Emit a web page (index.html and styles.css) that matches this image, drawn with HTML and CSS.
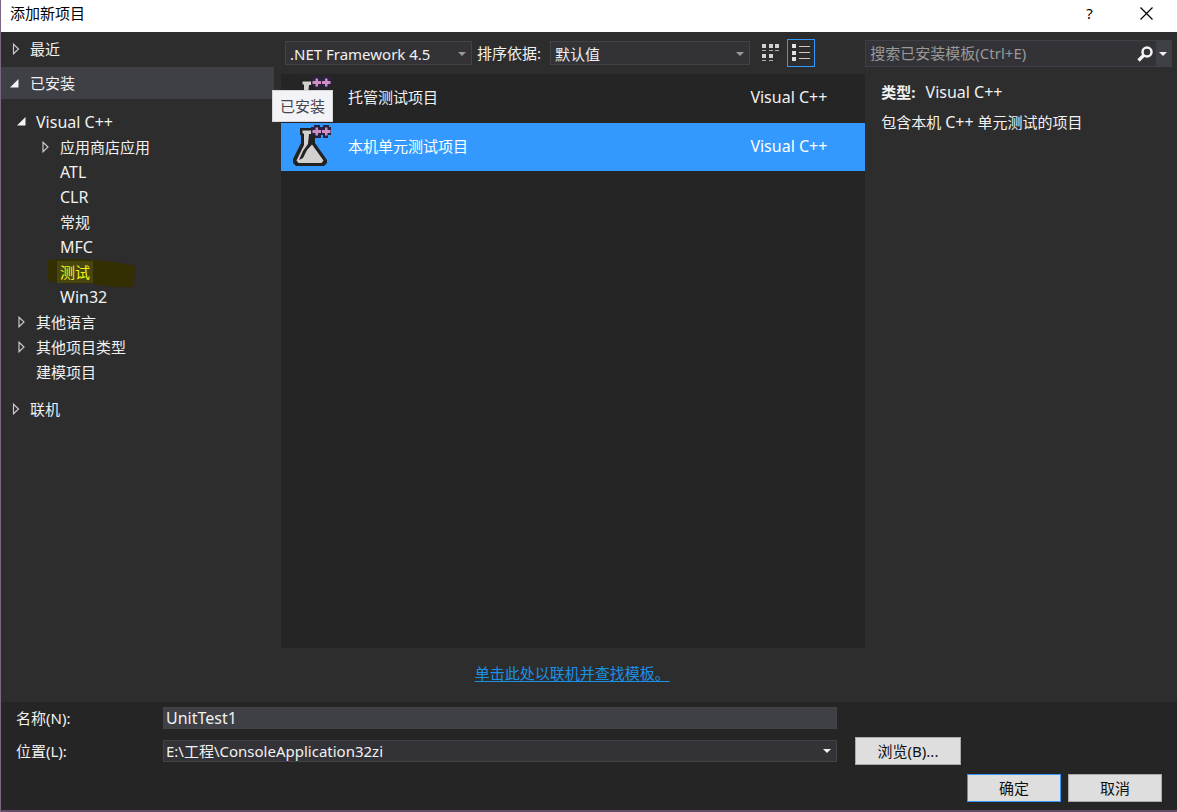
FILE: index.html
```html
<!DOCTYPE html>
<html lang="zh-CN">
<head>
<meta charset="utf-8">
<title>添加新项目</title>
<link rel="stylesheet" href="styles.css">
</head>
<body>
<svg class="defs" aria-hidden="true">
  <symbol id="closed" viewBox="0 0 8 12"><path d="M1.5 1.2v9.6L6.5 6z" fill="none" stroke="#c8c8c8" stroke-width="1.2"/></symbol>
  <symbol id="open" viewBox="0 0 9 9"><path d="M8.500 0v8.500H0z" fill="#f4f4f4"/></symbol>
  <symbol id="down" viewBox="0 0 8 4"><path d="M0 0h8L4 4z" fill="currentColor"/></symbol>
  <symbol id="flask" viewBox="0 0 40 42">
    <path d="M8 3h16v7h-1v8l12 17v3l-3 3H4l-3-3v-4L9 18v-8H8z" fill="#222"/>
    <path d="M10.500 5.500h11v3H20v11l11.500 16-2 2.500h-23l-2-2.500L12 20V8.500h-1.500z" fill="#d2d1cf"/>
    <path d="M17 9h3.500v10L15 25l-4 8-4 2 4-9 5-7z" fill="#222"/>
    <path d="M19 2h3V0h6v2h3V0h6v2h2v8h-3v3h-5v-3h-2v3h-6v-3h-4z" fill="#2a2340"/>
    <path d="M23.500 2.500h2.500V5h3v3h-3v2.500h-2.500V8h-3V5h3zM33 2.500h2.500V5h3v3h-3v2.500H33V8h-3V5h3z" fill="#cf8fc4"/>
  </symbol>
</svg>
<div class="dialog">
  <header class="titlebar">
    <h1 class="title">添加新项目</h1>
    <button class="sysbtn" aria-label="帮助">?</button>
    <button class="sysbtn" aria-label="关闭"><svg width="13" height="13" viewBox="0 0 13 13"><path d="M.5.5l12 12M12.500.5l-12 12" stroke="#000" stroke-width="1.200"/></svg></button>
  </header>

  <main class="main">
    <nav class="sidebar" aria-label="模板类别">
      <button class="section"><svg class="arrow" width="8" height="12"><use href="#closed"/></svg>最近</button>
      <div class="installed">
        <button class="section active"><svg class="arrow" width="9" height="9"><use href="#open"/></svg>已安装</button>
        <span class="tooltip" role="tooltip">已安装</span>
      </div>
      <ul class="tree">
        <li><button class="node latin"><svg class="arrow" width="9" height="9"><use href="#open"/></svg>Visual C++</button>
          <ul class="subtree">
            <li><button class="node"><svg class="arrow" width="8" height="12"><use href="#closed"/></svg>应用商店应用</button></li>
            <li><button class="node leaf latin">ATL</button></li>
            <li><button class="node leaf latin">CLR</button></li>
            <li><button class="node leaf">常规</button></li>
            <li><button class="node leaf latin">MFC</button></li>
            <li class="marked">
              <svg class="marker" width="88" height="30" viewBox="0 0 88 30" aria-hidden="true"><path d="M0 1q20-3 44 0 22 1 43 6l-1 21q-30 1-44-4-22 2-42-2z"/></svg>
              <button class="node leaf current"><span class="current-label">测试</span></button></li>
            <li><button class="node leaf latin">Win32</button></li>
          </ul>
        </li>
        <li><button class="node"><svg class="arrow" width="8" height="12"><use href="#closed"/></svg>其他语言</button></li>
        <li><button class="node"><svg class="arrow" width="8" height="12"><use href="#closed"/></svg>其他项目类型</button></li>
        <li><button class="node leaf">建模项目</button></li>
      </ul>
      <button class="section"><svg class="arrow" width="8" height="12"><use href="#closed"/></svg>联机</button>
    </nav>

    <section class="center">
      <div class="toolbar">
        <div class="combo framework">
          <select class="field" aria-label="框架版本"><option>.NET Framework 4.5</option></select>
          <svg class="chevron" width="8" height="4"><use href="#down"/></svg>
        </div>
        <label class="sort-label" for="sort">排序依据:</label>
        <div class="combo sort">
          <select class="field" id="sort"><option>默认值</option></select>
          <svg class="chevron" width="8" height="4"><use href="#down"/></svg>
        </div>
        <button class="view" aria-label="小图标"><svg width="18" height="20" viewBox="0 0 18 20" fill="#d0d0d0"><path d="M0 1h4v4H0zM7 1h4v4H7zM13 1h4v4h-4zM0 11h4v4H0zM7 11h4v4H7z"/><path d="M0 7h4v1H0zM7 7h4v1H7zM13 7h4v1h-4zM0 17h4v1H0zM7 17h4v1H7z" opacity=".8"/></svg></button>
        <button class="view selected" aria-label="列表"><svg width="18" height="18" viewBox="0 0 18 18"><path d="M0 0h4v4H0zM0 7h4v4H0zM0 13h4v4H0z" fill="#e2e2e2"/><path d="M7 2.500h11M7 8.500h11M7 14.500h11" stroke="#dcc5b4" stroke-width="1.200"/></svg></button>
      </div>
      <ul class="templates">
        <li><button class="template"><svg class="flask" width="40" height="42"><use href="#flask"/></svg><span class="name">托管测试项目</span><span class="latin">Visual C++</span></button></li>
        <li><button class="template chosen"><svg class="flask" width="40" height="42"><use href="#flask"/></svg><span class="name">本机单元测试项目</span><span class="latin">Visual C++</span></button></li>
      </ul>
      <div class="online"><a class="link" href="#">单击此处以联机并查找模板。</a></div>
    </section>

    <aside class="details">
      <div class="search">
        <input class="search-input" type="text" aria-label="搜索已安装模板" placeholder="搜索已安装模板(Ctrl+E)">
        <button class="search-go" aria-label="搜索"><svg width="16" height="16" viewBox="0 0 16 16" fill="none" stroke="#f4f4f4"><circle cx="10" cy="6" r="4.500" stroke-width="2.500"/><path d="M6.500 9.500L1.500 14.500" stroke-width="3.200"/></svg></button>
        <button class="search-more" aria-label="搜索选项"><svg width="8" height="4"><use href="#down"/></svg></button>
      </div>
      <div class="info">
        <p class="line"><strong class="key">类型:</strong><span class="latin">Visual C++</span></p>
        <p class="line">包含本机 <span class="latin">C++</span> 单元测试的项目</p>
      </div>
    </aside>
  </main>

  <footer class="footer">
    <div class="form">
      <label for="name">名称(N):</label>
      <input class="text latin" id="name" type="text" value="UnitTest1">
      <span></span>
      <label for="place">位置(L):</label>
      <div class="combo">
        <input class="text place" id="place" type="text" value="E:\工程\ConsoleApplication32zi">
        <svg class="chevron bright" width="8" height="4"><use href="#down"/></svg>
      </div>
      <button class="push">浏览(B)...</button>
    </div>
    <div class="actions">
      <button class="push default">确定</button>
      <button class="push">取消</button>
    </div>
  </footer>
</div>
</body>
</html>
```
FILE: styles.css
```css
* { box-sizing: border-box; }

body {
  margin: 0;
  background: #2d2d2e;
  color: #f1f1f1;
  font: 15px/24px "Noto Sans", "Noto Sans CJK SC", sans-serif;
}

button, input, select { font: inherit; color: inherit; }
button { border: 0; padding: 0; background: none; }
ul { margin: 0; padding: 0; list-style: none; }
.latin { font-size: 16px; }
.defs { position: absolute; width: 0; height: 0; }

.dialog {
  display: flex;
  flex-direction: column;
  min-height: 100vh;
  border-left: 1px solid #7d6684;
}

.titlebar {
  display: flex;
  align-items: center;
  height: 32px;
  padding: 0 2px 6px 9px;
  background: #fff;
  color: #000;
}
.title { flex: 1; margin: 0; font-size: 15px; font-weight: 400; }
.sysbtn { display: flex; align-items: center; justify-content: center; width: 57px; height: 26px; }

.main {
  flex: 1;
  display: grid;
  grid-template-columns: 280px minmax(0, 15fr) minmax(0, 8fr);
}

.sidebar { display: flex; flex-direction: column; }
.section {
  display: flex;
  align-items: center;
  width: 100%;
  height: 35px;
  padding: 0 0 2px 11px;
  text-align: left;
}
.section .arrow { width: 8px; margin-right: 10px; }
.section.active { width: 273px; height: 32px; padding: 0 0 0 9px; background: #3f3f46; }
.section.active .arrow { width: 9px; margin-right: 11px; }
.installed { position: relative; }
.tooltip {
  position: absolute;
  left: 271px;
  top: 23px;
  z-index: 2;
  padding: 3px 7px;
  border: 1px solid #d5d5da;
  background: #f3f3f7;
  color: #45454d;
  white-space: nowrap;
}

.tree { padding: 10px 0 8px 16px; }
.subtree { padding-left: 24px; }
.node { display: flex; align-items: center; width: 100%; height: 25px; text-align: left; }
.node .arrow { width: 9px; margin-right: 10px; }
.leaf { padding-left: 19px; }
.marked { position: relative; }
.marked .node { position: relative; }
.current { color: #f4f41a; }
.current-label { margin-left: -3px; padding: 0 3px; background: #47460e; line-height: 22px; }
.marker { position: absolute; left: 7px; top: 0; fill: #332f02; }

.center { display: flex; flex-direction: column; }
.toolbar { display: flex; align-items: center; height: 42px; padding-left: 4px; }
.combo { position: relative; display: flex; }
.framework { width: 187px; }
.sort { width: 200px; margin-right: 7px; }
.sort-label { margin: 0 9px 0 5px; }
.field {
  width: 100%;
  height: 24px;
  padding: 0 4px 2px;
  border: 1px solid #434346;
  border-radius: 0;
  background: #333337;
  appearance: none;
}
.chevron { position: absolute; right: 6px; top: 11px; color: #999; pointer-events: none; }
.chevron.bright { color: #f1f1f1; }
.view { display: flex; align-items: center; justify-content: center; width: 28px; height: 28px; margin-right: 2px; }
.view.selected { border: 1px solid #3399ff; }

.templates { flex: 1; display: flex; flex-direction: column; gap: 1px; background: #252526; }
.template { display: flex; align-items: center; width: 100%; height: 48px; padding: 0 38px 2px 11px; text-align: left; }
.template.chosen { background: #3399ff; color: #fff; }
.flask { margin-right: 16px; }
.name { flex: 1; }
.online { display: flex; align-items: center; justify-content: center; height: 54px; padding: 0 2px 4px 0; }
.link { color: #1b91e6; text-underline-offset: 2px; }

.details { padding: 8px 5px 0 0; }
.search { display: flex; height: 27px; border: 1px solid #3f3f46; background: #333337; }
.search-input { flex: 1; min-width: 0; padding: 0 4px 2px; border: 0; background: none; }
.search-input::placeholder { color: #999; opacity: 1; }
.search-go { display: flex; align-items: center; justify-content: center; width: 22px; }
.search-more { display: flex; align-items: center; justify-content: center; width: 15px; background: #3f3f46; }
.info { padding: 13px 16px; }
.line { margin: 0 0 6px; }
.key { margin-right: 10px; }

.footer { padding: 4px 15px 8px; border-bottom: 2px solid #654c6a; background: #252526; }
.form {
  display: grid;
  grid-template-columns: 147px minmax(0, 674px) 124px;
  row-gap: 7px;
  align-items: center;
}
.text {
  width: 100%;
  height: 22px;
  padding: 0 2px;
  border: 1px solid #434346;
  background: #3f3f46;
}
.place { background: #333337; }
.form .chevron { top: 9px; }
.push { height: 28px; border: 1px solid #aaa; background: #dedede; color: #111; }
.form .push { margin-left: 18px; }
.actions { display: flex; justify-content: flex-end; gap: 7px; padding-top: 9px; }
.actions .push { width: 94px; }
.actions .default { border-color: #3399ff; }
```
